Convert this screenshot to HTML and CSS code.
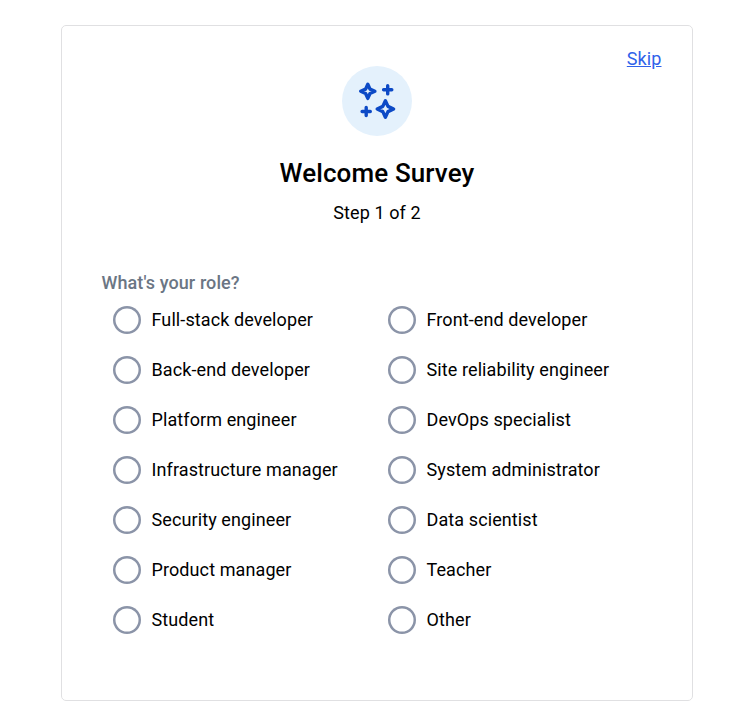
FILE: index.html
```html
<!DOCTYPE html>
<html lang="en">
<head>
<meta charset="utf-8">
<title>Welcome Survey</title>
<link rel="stylesheet" href="styles.css">
</head>
<body>
<main class="card">
  <a class="skip" href="#">Skip</a>
  <div class="badge">
    <svg class="sparkles" viewBox="0 0 40 40" fill="none" stroke="#0d4ac6" stroke-width="3.400" stroke-linejoin="round" stroke-linecap="round">
      <path d="M10.800 3.200 L13 8.100 L17.900 10.300 L13 12.500 L10.800 17.400 L8.600 12.500 L3.700 10.300 L8.600 8.100Z"/>
      <path d="M28.400 19.800 L31 25.400 L36.600 28 L31 30.600 L28.400 36.200 L25.800 30.600 L20.200 28 L25.800 25.400Z"/>
      <path d="M30.700 4.700V12.900M26.600 8.800H34.800M9.200 26.400V34.600M5.100 30.500H13.300"/>
    </svg>
  </div>
  <h1 class="title">Welcome Survey</h1>
  <p class="step">Step 1 of 2</p>
  <form class="survey">
    <h2 class="question">What's your role?</h2>
    <div class="options">
      <label class="option"><input type="radio" name="role">Full-stack developer</label>
      <label class="option"><input type="radio" name="role">Front-end developer</label>
      <label class="option"><input type="radio" name="role">Back-end developer</label>
      <label class="option"><input type="radio" name="role">Site reliability engineer</label>
      <label class="option"><input type="radio" name="role">Platform engineer</label>
      <label class="option"><input type="radio" name="role">DevOps specialist</label>
      <label class="option"><input type="radio" name="role">Infrastructure manager</label>
      <label class="option"><input type="radio" name="role">System administrator</label>
      <label class="option"><input type="radio" name="role">Security engineer</label>
      <label class="option"><input type="radio" name="role">Data scientist</label>
      <label class="option"><input type="radio" name="role">Product manager</label>
      <label class="option"><input type="radio" name="role">Teacher</label>
      <label class="option"><input type="radio" name="role">Student</label>
      <label class="option"><input type="radio" name="role">Other</label>
    </div>
  </form>
</main>
</body>
</html>
```
FILE: styles.css
```css
* { box-sizing: border-box; }
body {
  margin: 0;
  background: #fff;
  color: #000;
  font-family: Roboto, sans-serif;
  font-size: 18px;
  letter-spacing: 0.1px;
}
.card {
  position: relative;
  width: 632px;
  height: 676px;
  margin: 25px 0 0 61px;
  padding: 40px;
  border: 1px solid #e0e0e2;
  border-radius: 5px;
}
.skip {
  position: absolute;
  top: 20px;
  right: 30.500px;
  line-height: 26px;
  color: #2f62ea;
}
.badge {
  display: flex;
  align-items: center;
  justify-content: center;
  width: 70px;
  height: 70px;
  margin: 0 auto;
  border-radius: 50%;
  background: #e4f1fc;
}
.sparkles { width: 40px; height: 40px; }
.title {
  margin: 20px 0 0;
  font-size: 26px;
  font-weight: 500;
  line-height: 34px;
  letter-spacing: 0.12px;
  text-align: center;
}
.step {
  margin: 10px 0 0;
  line-height: 26px;
  text-align: center;
}
.survey { margin-top: 44px; }
.question {
  margin: 0 0 0 -0.5px;
  font-size: 18px;
  font-weight: 500;
  line-height: 26px;
  letter-spacing: 0.09px;
  color: #6b7684;
}
.options {
  display: grid;
  grid-template-columns: 275px 275px;
  grid-auto-rows: 50px;
  margin-top: -2px;
  padding-left: 11px;
}
.option {
  display: flex;
  align-items: center;
  gap: 10.500px;
}
.option input {
  appearance: none;
  width: 28px;
  height: 28px;
  margin: 2px 0 0;
  border-radius: 50%;
  box-shadow: inset 0 0 0 2.500px #8b94a8;
}
```
